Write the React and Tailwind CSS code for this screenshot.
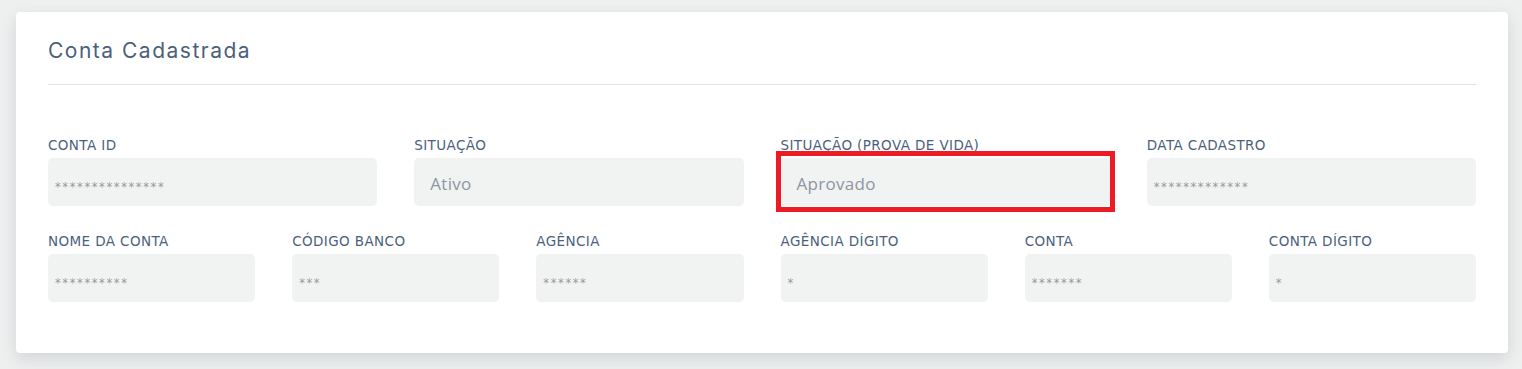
import React from 'react';

const topFields = [
  { label: 'CONTA ID', value: '***************', masked: true },
  { label: 'SITUAÇÃO', value: 'Ativo' },
  { label: 'SITUAÇÃO (PROVA DE VIDA)', value: 'Aprovado', highlight: true },
  { label: 'DATA CADASTRO', value: '*************', masked: true },
];

const bottomFields = [
  { label: 'NOME DA CONTA', value: '**********' },
  { label: 'CÓDIGO BANCO', value: '***' },
  { label: 'AGÊNCIA', value: '******' },
  { label: 'AGÊNCIA DÍGITO', value: '*' },
  { label: 'CONTA', value: '*******' },
  { label: 'CONTA DÍGITO', value: '*' },
];

function Field({ label, value, highlight, masked = true }) {
  return (
    <div className="flex flex-col">
      <label className="mb-[3px] text-[13.5px] leading-[19px] text-[#4b5f7c] font-['DejaVu_Sans',sans-serif] tracking-[0.4px]">
        {label}
      </label>
      <div className="relative flex h-12 items-center rounded-[5px] bg-[#f1f2f2]">
        {masked ? (
          <span className="pl-[7px] pt-[11px] text-[11.5px] tracking-[1.6px] text-[#9a9a9a] font-['DejaVu_Sans',sans-serif]">
            {value}
          </span>
        ) : (
          <span className="pl-4 pt-[3px] text-[17px] tracking-[0.3px] text-[#8d96a1] font-['Open_Sans',sans-serif]">
            {value}
          </span>
        )}
        {highlight && (
          <div className="absolute -left-[5px] -right-[5px] -top-[7px] -bottom-[6px] border-[5px] border-[#ed1c24]" />
        )}
      </div>
    </div>
  );
}

export default function App() {
  return (
    <div className="min-h-[369px] bg-[#eef0f0] pl-4 pr-[14px] pt-3 pb-4">
      <div className="rounded-[4px] bg-white px-8 pb-[51px] shadow-[0_6px_16px_rgba(40,50,60,0.14)]">
        <div className="flex h-[73px] items-center border-b border-[#dfe3e8] pt-[6px]">
          <h2 className="text-[21px] tracking-[1.5px] text-[#4b5f7c] font-['Inter',sans-serif]">
            Conta Cadastrada
          </h2>
        </div>
        <div className="grid grid-cols-4 gap-x-[37px] pt-[51px]">
          {topFields.map((f) => (
            <Field key={f.label} {...f} masked={!!f.masked} />
          ))}
        </div>
        <div className="mt-[26px] grid grid-cols-6 gap-x-[37px]">
          {bottomFields.map((f) => (
            <Field key={f.label} {...f} />
          ))}
        </div>
      </div>
    </div>
  );
}
